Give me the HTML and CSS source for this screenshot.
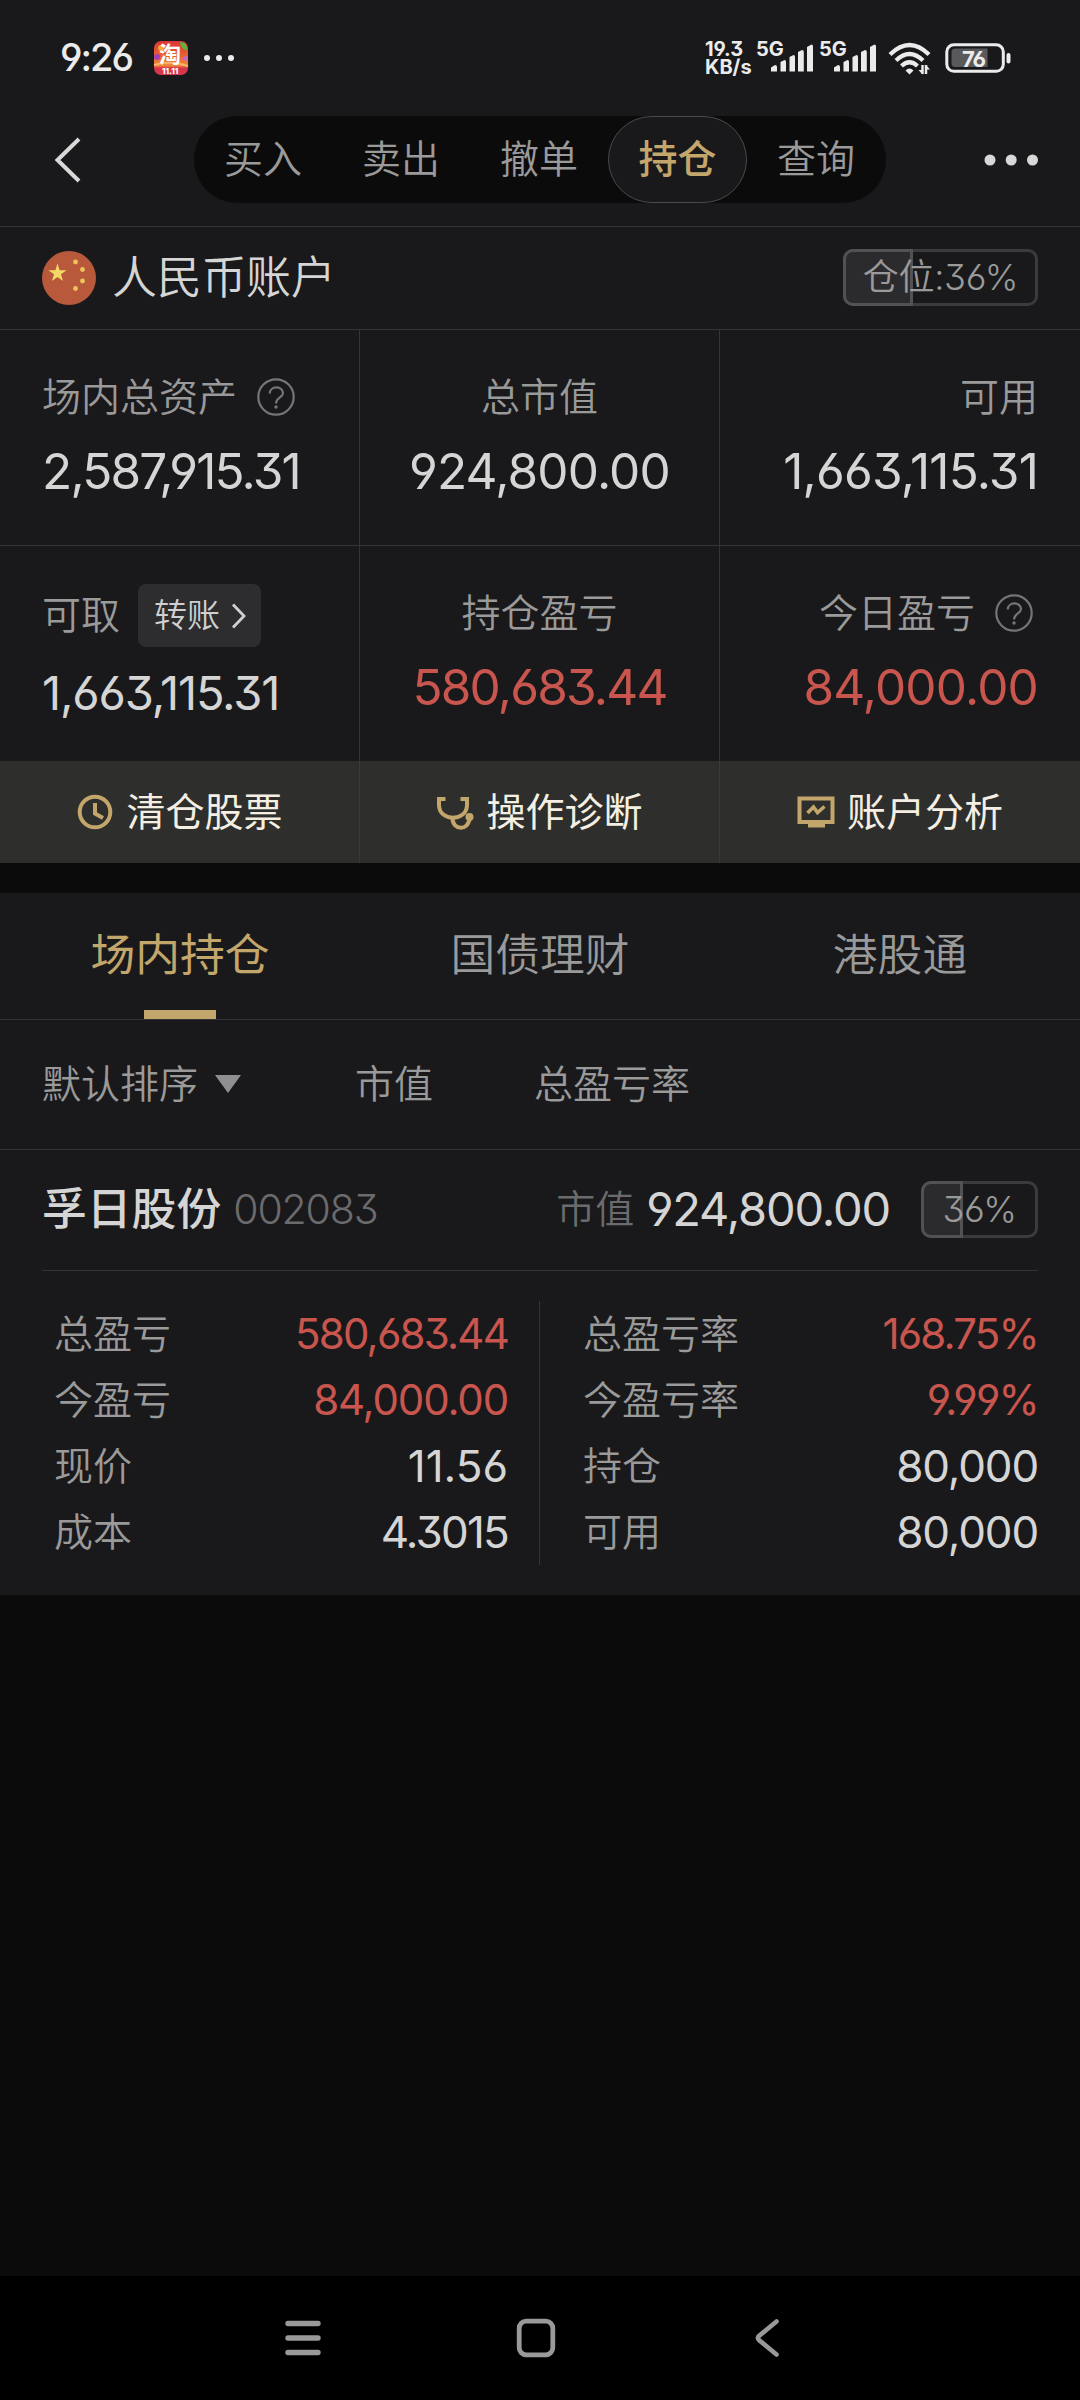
FILE: index.html
```html
<!DOCTYPE html>
<html lang="zh-CN">
<head>
<meta charset="utf-8">
<title>持仓</title>
<link rel="stylesheet" href="styles.css">
</head>
<body>
<div class="screen">
  <header class="top">
    <div class="status">
      <span class="clock num">9:26</span>
      <span class="app-icon">
        <svg width="34" height="34" viewBox="0 0 34 34">
          <defs><linearGradient id="tb" x1="0" y1="0" x2="0" y2="1"><stop offset="0" stop-color="#d8363a"/><stop offset=".45" stop-color="#e8642c"/><stop offset=".72" stop-color="#f08a3a"/><stop offset=".8" stop-color="#d9324a"/><stop offset="1" stop-color="#d83a50"/></linearGradient></defs>
          <rect width="34" height="34" rx="7" fill="url(#tb)"/>
          <path d="M26 1.5Q33 0 33 9Q27 9 26 1.5Z" fill="#5fb53c"/>
          <circle cx="7" cy="7" r="3" fill="#f3a73a"/><circle cx="3" cy="16" r="3" fill="#a43bb8"/>
          <path d="M0 24Q17 19 34 25" stroke="#f6b56a" stroke-width="2" fill="none"/>
          <path d="M27 18L33 14V20Z" fill="#c86ac0"/>
          <text x="5" y="21" class="tao">淘</text>
          <text x="8" y="33" class="tao-date">11.11</text>
        </svg>
      </span>
      <svg class="more-apps" width="30" height="8" viewBox="0 0 30 8"><g fill="#ebebeb"><circle cx="3" cy="4" r="3"/><circle cx="15" cy="4" r="3"/><circle cx="27" cy="4" r="3"/></g></svg>
      <div class="net"><span>19.3</span><span>KB/s</span></div>
      <svg class="signal" width="63" height="34" viewBox="0 0 63 34"><text x="0" y="15">5G</text><path d="M15 30.500v-4l4-2.500q2 0 2 2v4.500zM24.500 30.500V21l4-2q1.500 0 1.500 2v9.500zM33.500 30.500V16l4-2q1.500 0 1.500 2v14.500zM42 30.500V11l4-2q1.800 0 1.800 2v19.500zM51 30.500V6l4.500-2.500q1.500 0 1.500 2v25z"/></svg>
      <svg class="signal" width="69" height="34" viewBox="0 0 69 34"><text x="0" y="15">5G</text><path d="M15 30.500v-4l4-2.500q2 0 2 2v4.500zM24.500 30.500V21l4-2q1.500 0 1.500 2v9.500zM33.500 30.500V16l4-2q1.500 0 1.500 2v14.500zM42 30.500V11l4-2q1.800 0 1.800 2v19.500zM51 30.500V6l4.500-2.500q1.500 0 1.500 2v25z"/></svg>
      <svg class="wifi" width="44" height="34" viewBox="0 0 44 34"><g fill="none" stroke="#ebebeb" stroke-width="4.200"><path d="M2 13.500Q21.500-5.500 41 13.500"/><path d="M8 19.500Q21.500 6.500 35 19.500"/><path d="M13.500 25Q21.500 17.500 29.500 25"/></g><path d="M17.500 29.500Q21.500 25.500 25.500 29.500L21.500 33.500Z" fill="#ebebeb"/><path d="M34.500 24v9M38 24v9" stroke="#ebebeb" stroke-width="2.500" fill="none"/><path d="M30.500 29H34.500V33.500ZM42 28.500H38V24Z" fill="#ebebeb"/></svg>
      <svg class="battery" width="66" height="34" viewBox="0 0 66 34"><rect x="1.800" y="3.800" width="56.500" height="26.500" rx="7" fill="none" stroke="#ebebeb" stroke-width="3"/><path d="M10 7.500H42.500V26H10Q6.500 26 6.500 22.500V11Q6.500 7.500 10 7.500Z" fill="#59595b"/><rect x="61.500" y="12" width="4" height="10.500" rx="2" fill="#ebebeb"/><text x="17" y="25.500">76</text></svg>
    </div>
    <nav class="nav">
      <svg class="back" width="30" height="48" viewBox="0 0 30 48"><path d="M26 3L4.500 24L26 45" fill="none" stroke="#d8d8d8" stroke-width="4"/></svg>
      <div class="seg">
        <span>买入</span><span>卖出</span><span>撤单</span><span class="on">持仓</span><span>查询</span>
      </div>
      <svg class="dots" width="56" height="12" viewBox="0 0 56 12"><g fill="#d8d8d8"><circle cx="6" cy="6" r="5.500"/><circle cx="27.200" cy="6" r="5.500"/><circle cx="48.500" cy="6" r="5.500"/></g></svg>
    </nav>
  </header>

  <section class="account">
    <svg class="flag" width="54" height="54" viewBox="0 0 54 54"><circle cx="27" cy="27" r="27" fill="#b9593b"/><path d="M15.500 12.500l2.100 6.700h7l-5.700 4.100 2.200 6.700-5.600-4.100-5.600 4.100 2.200-6.700-5.700-4.100h7z" fill="#f5d765"/><g fill="#efc45c"><circle cx="33.500" cy="11" r="2.400"/><circle cx="40.500" cy="18.500" r="2.400"/><circle cx="40.500" cy="30" r="2.400"/><circle cx="33.500" cy="37.500" r="2.400"/></g></svg>
    <h1>人民币账户</h1>
    <div class="badge wide"><i class="fill" style="width:36%"></i><span>仓位:36%</span></div>
  </section>

  <section class="grid">
    <div class="cell">
      <div class="label">场内总资产<svg class="help" width="38" height="38" viewBox="0 0 38 38"><g fill="none" stroke="#757577" stroke-width="2.200"><circle cx="19" cy="19" r="17.700"/><path d="M12.800 15.500C12.800 7.500 26 7.500 26 15C26 19.500 19 19.500 19 25.500"/></g><circle cx="19" cy="29" r="1.700" fill="#757577"/></svg></div>
      <div class="value num tightest">2,587,915.31</div>
    </div>
    <div class="cell mid">
      <div class="label">总市值</div>
      <div class="value num snug">924,800.00</div>
    </div>
    <div class="cell end">
      <div class="label">可用</div>
      <div class="value num snug">1,663,115.31</div>
    </div>
    <div class="cell tall">
      <div class="label">可取<button class="transfer">转账<svg width="15" height="26" viewBox="0 0 15 26"><path d="M2 1.500L13 13L2 24.500" fill="none" stroke="#d0d0d0" stroke-width="2.800"/></svg></button></div>
      <div class="value small num tight">1,663,115.31</div>
    </div>
    <div class="cell mid">
      <div class="label">持仓盈亏</div>
      <div class="value red num tightest">580,683.44</div>
    </div>
    <div class="cell end">
      <div class="label">今日盈亏<svg class="help" width="38" height="38" viewBox="0 0 38 38"><g fill="none" stroke="#757577" stroke-width="2.200"><circle cx="19" cy="19" r="17.700"/><path d="M12.800 15.500C12.800 7.500 26 7.500 26 15C26 19.500 19 19.500 19 25.500"/></g><circle cx="19" cy="29" r="1.700" fill="#757577"/></svg></div>
      <div class="value red num snug">84,000.00</div>
    </div>
  </section>

  <section class="actions">
    <a><svg width="38" height="38" viewBox="0 0 38 38"><g fill="none" stroke="#c3a66b"><circle cx="19" cy="19" r="15.300" stroke-width="4"/><path d="M19 10V20.500L27 25" stroke-width="4"/></g></svg>清仓股票</a>
    <a><svg width="38" height="38" viewBox="0 0 38 38"><g fill="none" stroke="#c3a66b" stroke-width="4"><path d="M9.500 6H3V12C3 29 31 29 31 12V6H24.500"/><path d="M16.500 25C16.500 38 33 38 33.500 25"/></g><circle cx="33.500" cy="24" r="4" fill="#c3a66b"/></svg>操作诊断</a>
    <a><svg width="38" height="38" viewBox="0 0 38 38"><rect x="2.500" y="5.500" width="33" height="23.500" fill="none" stroke="#c3a66b" stroke-width="4"/><path d="M11 29H28V34.500H11Z" fill="#c3a66b"/><path d="M10.500 20L16.500 14L20.500 19.500L27.500 13.500" fill="none" stroke="#c3a66b" stroke-width="3.600"/></svg>账户分析</a>
  </section>

  <section class="tabs"><span class="on">场内持仓</span><span>国债理财</span><span>港股通</span></section>

  <section class="sort">
    <span class="s1">默认排序<svg width="26" height="18" viewBox="0 0 26 18"><path d="M0 0H26L13 18Z" fill="#8f8f91"/></svg></span>
    <span class="s2">市值</span><span>总盈亏率</span>
  </section>

  <section class="stock">
    <div class="stock-head">
      <h2>孚日股份</h2><span class="code num tight">002083</span>
      <span class="mv">市值</span><span class="mv-num num tight">924,800.00</span>
      <div class="badge"><i class="fill" style="width:36%"></i><span>36%</span></div>
    </div>
    <div class="detail">
      <dl>
        <dt>总盈亏</dt><dd class="red num tightest">580,683.44</dd>
        <dt>今盈亏</dt><dd class="red num tight">84,000.00</dd>
        <dt>现价</dt><dd class="num">11.56</dd>
        <dt>成本</dt><dd class="num tightest">4.3015</dd>
      </dl>
      <dl>
        <dt>总盈亏率</dt><dd class="red num tightest">168.75%</dd>
        <dt>今盈亏率</dt><dd class="red num tightest">9.99%</dd>
        <dt>持仓</dt><dd class="num tight">80,000</dd>
        <dt>可用</dt><dd class="num tight">80,000</dd>
      </dl>
    </div>
  </section>
  <div class="space"></div>

  <footer class="sysnav">
    <svg width="38" height="40" viewBox="0 0 38 40"><path d="M4 5.500H34M4 20H34M4 34.500H34" stroke="#999" stroke-width="5.400" stroke-linecap="round"/></svg>
    <svg width="40" height="40" viewBox="0 0 40 40"><rect x="3.200" y="3.200" width="33.600" height="33.600" rx="7" fill="none" stroke="#999" stroke-width="4.800"/></svg>
    <svg width="26" height="40" viewBox="0 0 26 40"><path d="M22.500 3.500L5 18Q3 20 5 22L22.500 36.500" fill="none" stroke="#999" stroke-width="4.600" stroke-linecap="round"/></svg>
  </footer>
</div>
</body>
</html>
```
FILE: styles.css
```css
* { box-sizing: border-box; }
body { margin: 0; background: #0b0b0b; }
.screen {
  width: 1080px; height: 2400px; display: flex; flex-direction: column;
  background: #0b0b0b; color: #d5d5d5;
  font-family: Inter, "Noto Sans CJK SC", sans-serif;
  font-size: 39px; line-height: 1.2; font-weight: 400;
  font-feature-settings: "cv03", "cv04", "cv09";
}
svg { display: block; flex: none; overflow: visible; }
h1, h2, dl, dt, dd { margin: 0; font-weight: inherit; font-size: inherit; }
.num { white-space: nowrap; }
.snug { letter-spacing: -0.8px; }
.tight { letter-spacing: -1.15px; }
.tightest { letter-spacing: -1.8px; }
.red { color: #c8564e; }

.top { background: #19191b; height: 227px; border-bottom: 1px solid #343436; }
.status { height: 116px; display: flex; align-items: center; padding: 0 69px 0 60px; color: #ebebeb; }
.clock { font-size: 38px; font-weight: 550; letter-spacing: -2px; width: 94px; }
.tao { font-size: 22px; font-weight: 700; fill: #fff; }
.tao-date { font-size: 8px; font-weight: 800; fill: #fff; }
.more-apps { margin-left: 16px; }
.net { margin-left: auto; width: 51px; display: flex; flex-direction: column; font-size: 20px; line-height: 18.500px; font-weight: 700; }
.signal { fill: #ebebeb; font-size: 20px; font-weight: 700; }
.wifi { margin-right: 13px; }
.battery { fill: #ebebeb; font-size: 22px; font-weight: 650; letter-spacing: -1px; }

.nav { display: flex; align-items: center; height: 87px; padding: 0 40px 0 53px; }
.seg { display: flex; width: 692px; height: 87px; margin-left: 111px; border-radius: 44px; background: #0b0b0b; color: #9a9a9a; font-weight: 350; }
.seg span { width: 138px; display: flex; align-items: center; justify-content: center; }
.seg .on { width: 139px; background: #19191b; border: 1px solid #4a4a4c; border-radius: 44px; color: #c3a66b; font-weight: 500; }
.dots { margin-left: auto; }

.account { background: #19191b; height: 103px; border-bottom: 1px solid #343436; display: flex; align-items: center; padding: 0 42px 1px; }
.account h1 { font-size: 45px; font-weight: 350; margin-left: 16px; letter-spacing: -0.3px; }
.badge { position: relative; width: 117px; height: 57px; box-shadow: inset 0 0 0 3px #3b3b3d; border-radius: 10px; display: flex; align-items: center; justify-content: center; font-size: 36px; font-weight: 350; color: #9a9a9a; }
.badge.wide { width: 195px; margin-left: auto; }
.badge span { position: relative; letter-spacing: -0.3px; }
.fill { position: absolute; left: 0; top: 0; height: 57px; background: #2b2b2d; border: 3px solid #525254; border-radius: 10px 0 0 10px; }

.grid { display: grid; grid-template-columns: repeat(3, 360px); grid-template-rows: 216px 215px; background: #19191b; }
.cell { padding: 39px 0 0 42px; border-right: 1px solid #343436; border-bottom: 1px solid #343436; }
.cell:nth-child(3n) { border-right: 0; }
.cell:nth-child(n+4) { border-bottom: 0; }
.cell.mid { padding-left: 0; text-align: center; }
.cell.end { padding: 39px 42px 0 0; }
.label { height: 56px; display: flex; align-items: center; color: #9a9a9a; font-weight: 350; }
.mid .label { justify-content: center; }
.end .label { justify-content: flex-end; }
.end .value { text-align: right; }
.help { margin-left: 20px; }
.end .help { margin-right: 5px; }
.value { font-size: 49.500px; line-height: 60px; margin-top: 16px; }
.tall .label { height: 61px; }
.value.small { font-size: 47px; margin-top: 17px; }
.transfer { font: inherit; font-size: 33px; color: #d0d0d0; border: 0; background: #2d2d2f; border-radius: 8px; width: 123px; height: 63px; margin-left: 18px; padding: 0 0 0 16px; display: flex; align-items: center; gap: 11px; }

.actions { display: grid; grid-template-columns: repeat(3, 360px); height: 102px; background: #2e2e2c; color: #f5efe3; }
.actions a { display: flex; align-items: center; justify-content: center; gap: 12px; border-right: 1px solid #3a3a3a; }
.actions a:last-child { border-right: 0; }

.tabs { margin-top: 30px; height: 127px; background: #19191b; border-bottom: 1px solid #343436; display: grid; grid-template-columns: repeat(3, 360px); font-size: 44.800px; font-weight: 350; color: #9a9a9a; }
.tabs span { position: relative; display: flex; justify-content: center; align-items: center; }
.tabs .on { color: #c3a66b; font-weight: 400; }
.tabs .on::after { content: ""; position: absolute; left: 144px; bottom: 0; width: 72px; height: 9px; background: #c3a66b; }

.sort { height: 130px; background: #19191b; border-bottom: 1px solid #343436; display: flex; align-items: center; padding-left: 42px; color: #9a9a9a; font-weight: 350; }
.s1 { display: flex; align-items: center; gap: 17px; width: 313px; }
.s2 { width: 179px; }

.stock { background: #19191b; height: 445px; padding: 0 42px; }
.stock-head { height: 121px; border-bottom: 1px solid #343436; display: flex; align-items: center; padding-bottom: 1px; }
.stock h2 { font-size: 44.800px; font-weight: 500; }
.code { font-size: 41px; font-weight: 300; color: #6b6b6d; margin-left: 12px; }
.mv { margin-left: auto; color: #6b6b6d; font-weight: 350; }
.mv-num { font-size: 47px; margin: 0 31px 0 12px; }
.detail { margin-top: 30px; height: 264px; display: grid; grid-template-columns: 498px 498px; }
.detail dl { display: grid; grid-template-columns: auto 1fr; grid-auto-rows: 66px; align-items: center; padding-left: 43px; }
.detail dl:first-child { padding: 0 31px 0 12px; border-right: 1px solid #343436; }
.detail dt { color: #9a9a9a; font-weight: 350; }
.detail dd { text-align: right; font-size: 44px; }
.detail dd.red { font-size: 42px; }

.space { flex: 1; }
.sysnav { height: 124px; background: #000; display: flex; align-items: center; padding-left: 284px; }
.sysnav svg + svg { margin-left: 194px; }
.sysnav svg:last-child { margin-left: 198px; }
```
